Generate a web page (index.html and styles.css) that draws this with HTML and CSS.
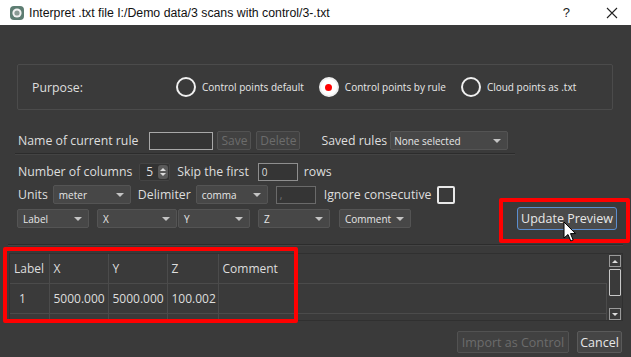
FILE: index.html
```html
<!DOCTYPE html>
<html lang="en">
<head>
    <meta charset="UTF-8">
    <title>Interpret .txt file</title>
    <link rel="stylesheet" href="styles.css">
</head>
<body>
    <div class="titlebar">
        <svg class="app-icon" width="14" height="14" viewBox="0 0 14 14">
            <rect x="0" y="0" width="14" height="14" rx="4" fill="#5d7d72"/>
            <circle cx="7" cy="7" r="4.6" fill="#f2f2f2"/>
            <circle cx="7" cy="7" r="2.6" fill="#8a9a94"/>
        </svg>
        <span class="title">Interpret .txt file I:/Demo data/3 scans with control/3-.txt</span>
        <span class="help">?</span>
        <svg class="close" width="12" height="12" viewBox="0 0 12 12">
            <path d="M1 1 L11 11 M11 1 L1 11" stroke="#222" stroke-width="1.1"/>
        </svg>
    </div>

    <div class="dialog">
        <div class="purpose">
            <span class="purpose-label">Purpose:</span>
            <label class="radio"><span class="radio-mark"></span>Control points default</label>
            <label class="radio checked"><span class="radio-mark"></span>Control points by rule</label>
            <label class="radio"><span class="radio-mark"></span>Cloud points as .txt</label>
        </div>

        <div class="row row-rule">
            <span class="lbl">Name of current rule</span>
            <span class="field name-field"></span>
            <button class="btn btn-save" disabled>Save</button>
            <button class="btn btn-delete" disabled>Delete</button>
            <span class="lbl saved-lbl">Saved rules</span>
            <span class="combo combo-saved">None selected<i class="caret"></i></span>
        </div>
        <div class="sep sep-short"></div>

        <div class="row row-cols">
            <span class="lbl">Number of columns</span>
            <span class="spin"><span class="spin-val">5</span><span class="spin-btns"><i class="up"></i><i class="down"></i></span></span>
            <span class="lbl skip-lbl">Skip the first</span>
            <span class="field skip-field">0</span>
            <span class="lbl rows-lbl">rows</span>
        </div>

        <div class="row row-units">
            <span class="lbl">Units</span>
            <span class="combo combo-units">meter<i class="caret"></i></span>
            <span class="lbl delim-lbl">Delimiter</span>
            <span class="combo combo-delim">comma<i class="caret"></i></span>
            <span class="field delim-field">,</span>
            <span class="lbl ignore-lbl">Ignore consecutive</span>
            <span class="checkbox"></span>
        </div>

        <div class="row row-map">
            <span class="combo map-label">Label<i class="caret"></i></span>
            <span class="combo map-x">X<i class="caret"></i></span>
            <span class="combo map-y">Y<i class="caret"></i></span>
            <span class="combo map-z">Z<i class="caret"></i></span>
            <span class="combo map-comment">Comment<i class="caret"></i></span>
            <button class="btn btn-update">Update Preview</button>
        </div>
        <div class="sep"></div>

        <div class="preview">
            <div class="table-wrap">
                <table class="grid">
                    <colgroup>
                        <col class="w-label">
                        <col class="w-x">
                        <col class="w-y">
                        <col class="w-z">
                        <col>
                    </colgroup>
                    <tr class="head">
                        <td>Label</td>
                        <td>X</td>
                        <td>Y</td>
                        <td>Z</td>
                        <td class="c-comment">Comment</td>
                    </tr>
                    <tr>
                        <td class="first">1</td>
                        <td>5000.000</td>
                        <td>5000.000</td>
                        <td>100.002</td>
                        <td></td>
                    </tr>
                    <tr>
                        <td></td><td></td><td></td><td></td><td></td>
                    </tr>
                </table>
            </div>
            <div class="vscroll">
                <span class="sb-arrow"><i class="up"></i></span>
                <span class="sb-handle"></span>
                <span class="sb-arrow"><i class="down"></i></span>
            </div>
        </div>

        <div class="footer">
            <button class="btn btn-import" disabled>Import as Control</button>
            <button class="btn btn-cancel">Cancel</button>
        </div>
    </div>

    <!-- annotation overlays -->
    <div class="mark mark-update"></div>
    <div class="mark mark-table"></div>
    <svg class="cursor" width="14" height="22" viewBox="0 0 14 22">
        <path d="M1 1 L1 17 L5 13.5 L7.8 20 L10.2 19 L7.5 12.6 L12.5 12.6 Z" fill="#fff" stroke="#000" stroke-width="1"/>
    </svg>
</body>
</html>
```

FILE: styles.css
```css
body {
    margin: 0;
    width: 631px;
    height: 357px;
    overflow: hidden;
    background-color: #3a3a3a;
    font-family: "Open Sans", sans-serif;
    color: #dedede;
    position: relative;
}
.titlebar {
    height: 25px;
    background-color: #fff;
    display: flex;
    align-items: center;
    padding-left: 10px;
}
.app-icon {
    flex: none;
}
.title {
    margin-left: 5px;
    font-family: "Liberation Sans", Arial, sans-serif;
    font-size: 12.3px;
    color: #111;
}
.help {
    margin-left: auto;
    font-family: "Liberation Sans", Arial, sans-serif;
    font-size: 13px;
    color: #222;
}
.close {
    margin: 0 13px 0 36px;
}

.dialog {
    padding: 0 8px;
}
.purpose {
    margin: 39px 10px 0 9px;
    height: 44px;
    border: 1px solid #4b4b4b;
    border-radius: 2px;
    display: flex;
    align-items: center;
    padding-left: 14px;
}
.purpose-label {
    font-size: 12.3px;
    width: 144px;
}
.radio {
    display: flex;
    align-items: center;
    font-size: 10px;
    color: #e8e8e8;
    margin-right: 15px;
}
.radio-mark {
    width: 16px;
    height: 16px;
    border: 2px solid #f0f0f0;
    border-radius: 50%;
    margin-right: 6px;
    box-sizing: content-box;
    position: relative;
}
.radio.checked .radio-mark {
    background-color: #fff;
}
.radio.checked .radio-mark::after {
    content: "";
    position: absolute;
    left: 4.5px;
    top: 4.5px;
    width: 7px;
    height: 7px;
    border-radius: 50%;
    background-color: #f00;
}

.row {
    display: flex;
    align-items: center;
    height: 19px;
    padding-left: 10px;
    font-size: 12.3px;
}
.row-rule {
    margin-top: 21px;
}
.row-cols {
    margin-top: 7px;
}
.row-units {
    margin-top: 4px;
}
.row-map {
    margin-top: 3px;
    height: 23px;
    padding-left: 9px;
}
.lbl {
    white-space: nowrap;
}
.sep {
    height: 1px;
    background-color: #2c2c2c;
    border-bottom: 1px solid #444;
    margin-top: 14px;
}
.sep-short {
    width: 500px;
    margin-left: 7px;
    margin-top: 3px;
}

.field {
    box-sizing: border-box;
    height: 18px;
    border: 1px solid #8e8e8e;
    background-color: #353535;
    font-size: 10px;
    line-height: 16px;
    padding-left: 3px;
}
.name-field {
    width: 64px;
    margin-left: 11px;
    border-color: #a8a8a8;
}
.skip-field {
    width: 40px;
    margin-left: 9px;
}
.delim-field {
    width: 40px;
    margin-left: 8px;
    border-color: #6a6a6a;
    color: #777;
}

.btn {
    box-sizing: border-box;
    height: 19px;
    padding: 0;
    font-family: "Open Sans", sans-serif;
    font-size: 12px;
    background-color: #454545;
    border: 1px solid #5a5a5a;
    border-radius: 2px;
    color: #e8e8e8;
}
.btn:disabled {
    background-color: #414141;
    border-color: #525252;
    color: #6c6c6c;
}
.btn-save {
    width: 34px;
    margin-left: 4px;
}
.btn-delete {
    width: 44px;
    margin-left: 5px;
}
.saved-lbl {
    margin-left: 21px;
}

.combo {
    box-sizing: border-box;
    height: 19px;
    display: flex;
    align-items: center;
    justify-content: space-between;
    padding: 0 6px 0 5px;
    font-size: 10px;
    background-color: #474747;
    border: 1px solid #545454;
    border-radius: 2px;
    color: #e6e6e6;
}
.caret {
    width: 0;
    height: 0;
    border-left: 4px solid transparent;
    border-right: 4px solid transparent;
    border-top: 4px solid #c4c4c4;
}
.combo-saved {
    width: 118px;
    margin-left: 3px;
    padding-left: 3px;
}
.combo-units {
    width: 78px;
    margin-left: 5px;
}
.delim-lbl {
    margin-left: 7px;
}
.combo-delim {
    width: 72px;
    margin-left: 5px;
}
.ignore-lbl {
    margin-left: 8px;
}
.checkbox {
    box-sizing: border-box;
    width: 18px;
    height: 18px;
    border: 2px solid #e8e8e8;
    border-radius: 2px;
    margin-left: 6px;
}

.spin {
    box-sizing: border-box;
    width: 31px;
    height: 18px;
    margin-left: 7px;
    background-color: #333;
    border: 1px solid #444;
    border-radius: 2px;
    display: flex;
    align-items: center;
    justify-content: space-between;
    padding: 0 1px 0 6px;
    font-size: 12px;
}
.spin-btns {
    width: 10px;
    height: 14px;
    background-color: #5a5a5a;
    border-radius: 3px;
    display: flex;
    flex-direction: column;
    align-items: center;
    justify-content: center;
    gap: 2px;
}
.up, .down {
    width: 0;
    height: 0;
    border-left: 3px solid transparent;
    border-right: 3px solid transparent;
}
.up {
    border-bottom: 3px solid #ddd;
}
.down {
    border-top: 3px solid #ddd;
}
.skip-lbl {
    margin-left: 7px;
}
.rows-lbl {
    margin-left: 6px;
}

.map-label {
    width: 72px;
}
.map-x {
    width: 80px;
    margin-left: 8px;
}
.map-y {
    width: 72px;
    margin-left: 1px;
}
.map-z {
    width: 72px;
    margin-left: 8px;
}
.map-comment {
    width: 72px;
    margin-left: 9px;
}
.btn-update {
    width: 100px;
    height: 23px;
    margin-left: 106px;
    font-size: 12.5px;
    background-color: #4a4a4a;
    border: 1px solid #5b8ed0;
    border-radius: 3px;
}

.preview {
    margin: 7px 0 0 1px;
    height: 68px;
    display: flex;
    border: 1px solid #303030;
    box-sizing: border-box;
}
.table-wrap {
    flex: 1;
    overflow: hidden;
}
.grid {
    border-collapse: collapse;
    table-layout: fixed;
    width: 100%;
    font-size: 12px;
}
.grid .w-label {
    width: 39px;
}
.grid .w-x {
    width: 59px;
}
.grid .w-y {
    width: 59px;
}
.grid .w-z {
    width: 51px;
}
.grid td {
    height: 29px;
    padding: 0 0 0 4px;
    border: 1px solid #4b4b4b;
    white-space: nowrap;
    overflow: hidden;
}
.grid tr:first-child td {
    border-top: none;
}
.grid td:first-child {
    border-left: none;
}
.grid .first {
    padding-left: 9px;
}
.grid .c-comment {
    border-right: none;
}
.vscroll {
    width: 12px;
    margin: 1px 1px 0 2px;
    display: flex;
    flex-direction: column;
}
.sb-arrow {
    box-sizing: border-box;
    height: 12px;
    border: 1px solid #9a9a9a;
    display: flex;
    align-items: center;
    justify-content: center;
}
.sb-handle {
    box-sizing: border-box;
    height: 27px;
    margin: 2px 0 auto;
    border: 1px solid #c8c8c8;
    border-radius: 1px;
}

.footer {
    display: flex;
    justify-content: flex-end;
    gap: 8px;
    margin-top: 10px;
    padding-right: 1px;
}
.footer .btn {
    height: 22px;
    font-size: 12.5px;
}
.btn-import {
    width: 112px;
}
.btn-cancel {
    width: 45px;
}

.mark {
    position: absolute;
    box-sizing: border-box;
    border: 4px solid #ff0000;
    border-radius: 2px;
}
.mark-update {
    left: 499px;
    top: 198px;
    width: 131px;
    height: 45px;
}
.mark-table {
    left: 3px;
    top: 247px;
    width: 295px;
    height: 76px;
}
.cursor {
    position: absolute;
    left: 563px;
    top: 221px;
}
```
